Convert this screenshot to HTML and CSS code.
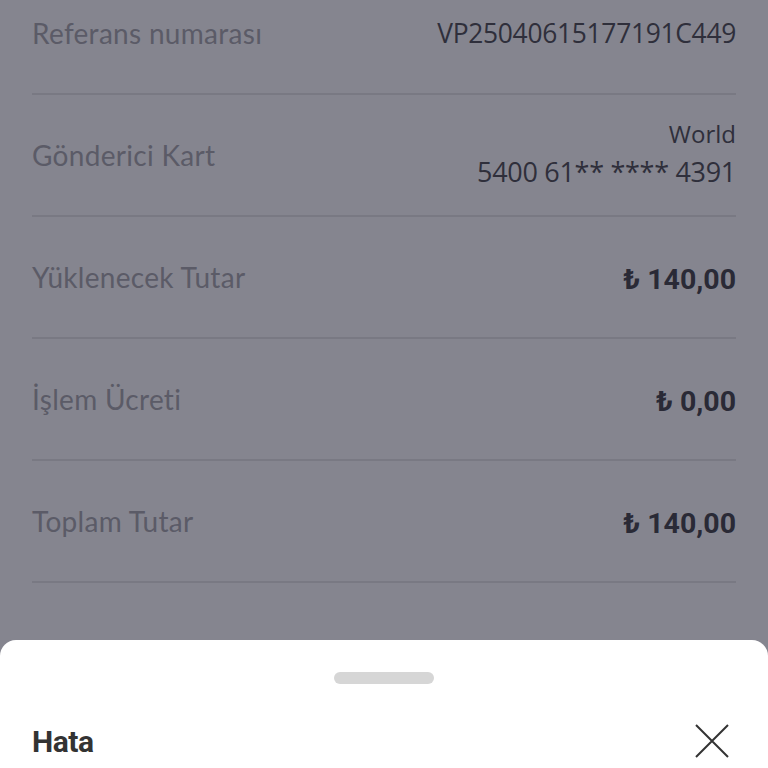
FILE: index.html
```html
<!DOCTYPE html>
<html lang="tr">
<head>
    <meta charset="UTF-8">
    <meta name="viewport" content="width=device-width, initial-scale=1.0">
    <title>Ödeme Detayı</title>
    <link rel="stylesheet" href="styles.css">
</head>
<body>
    <div class="details">
        <div class="row">
            <span class="label">Referans numarası</span>
            <span class="value">VP25040615177191C449</span>
        </div>
        <div class="row">
            <span class="label">Gönderici Kart</span>
            <div class="card">
                <span class="card-type">World</span>
                <span class="value">5400 61** **** 4391</span>
            </div>
        </div>
        <div class="row">
            <span class="label">Yüklenecek Tutar</span>
            <span class="amount">₺ 140,00</span>
        </div>
        <div class="row">
            <span class="label">İşlem Ücreti</span>
            <span class="amount">₺ 0,00</span>
        </div>
        <div class="row">
            <span class="label">Toplam Tutar</span>
            <span class="amount">₺ 140,00</span>
        </div>
    </div>

    <div class="sheet">
        <div class="handle"></div>
        <div class="sheet-header">
            <h2>Hata</h2>
            <button class="close" aria-label="Kapat">
                <svg width="34" height="34" viewBox="0 0 34 34"><path d="M1 1 L33 33 M33 1 L1 33" stroke="#333" stroke-width="2" fill="none"/></svg>
            </button>
        </div>
    </div>
</body>
</html>
```

FILE: styles.css
```css
body { margin: 0; background-color: #85858f; font-family: Lato, "Open Sans", sans-serif; overflow: hidden; height: 768px; }
.details { padding: 0 32px; margin-top: -27px; }
.row { height: 120px; border-bottom: 2px solid #797983; display: flex; align-items: center; justify-content: space-between; }
.label { font-size: 28px; letter-spacing: 0.3px; color: #5b5b67; }
.value { font-size: 26.4px; color: #2f2f3b; font-family: "Open Sans", sans-serif; letter-spacing: -0.3px; }
.card { display: flex; flex-direction: column; align-items: flex-end; margin-top: -2px; }
.card-type { font-size: 24px; color: #2f2f3b; font-family: "Open Sans", sans-serif; line-height: 30px; margin-bottom: 6px; }
.card .value { font-size: 27px; line-height: 34px; }
.amount { font-size: 28.5px; font-weight: bold; color: #2a2a36; font-family: Roboto, "DejaVu Sans", sans-serif; padding-top: 4px; }
.sheet { position: fixed; left: 0; right: 0; top: 640px; bottom: 0; background: #fff; border-radius: 16px 16px 0 0; padding: 0 32px; }
.handle { width: 100px; height: 12px; border-radius: 6px; background: #d6d6d6; margin: 32px auto 0; }
.sheet-header { display: flex; justify-content: space-between; align-items: center; margin-top: 38px; }
.sheet-header h2 { margin: 0; font-size: 30px; font-weight: bold; color: #333; font-family: Roboto, sans-serif; letter-spacing: -0.5px; padding-top: 2px; }
.close { background: none; border: none; padding: 0; margin-right: 7px; cursor: pointer; line-height: 0; }
```
